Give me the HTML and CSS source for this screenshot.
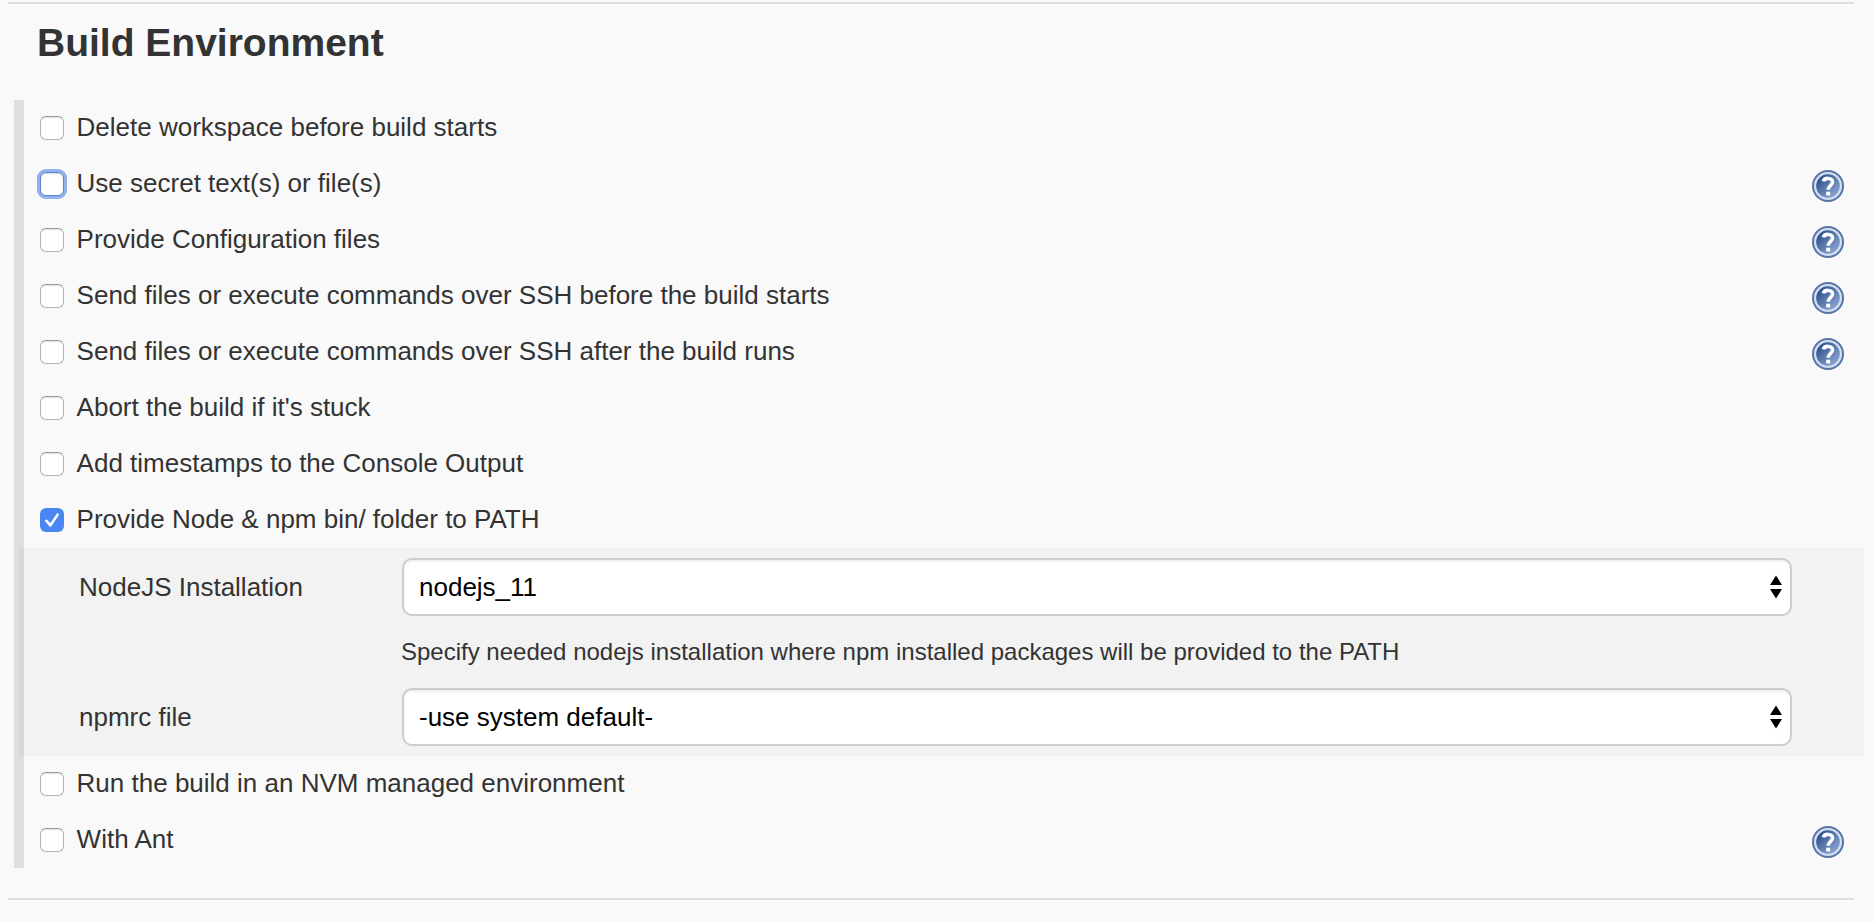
FILE: index.html
```
<!DOCTYPE html>
<html lang="en">
<head>
<meta charset="utf-8">
<title>Build Environment</title>
<link rel="stylesheet" href="styles.css">
</head>
<body>
<svg class="defs" width="0" height="0" aria-hidden="true">
  <defs>
    <linearGradient id="disc" x1="0" y1="0" x2="1" y2="1">
      <stop offset="0.2" stop-color="#34558f"/>
      <stop offset="0.85" stop-color="#8ba7d3"/>
    </linearGradient>
    <symbol id="help" viewBox="0 0 32 32">
      <circle cx="16" cy="16" r="16" fill="#5574a9"/>
      <circle cx="16" cy="16" r="12.9" fill="url(#disc)" stroke="#d3deef" stroke-width="2.2"/>
      <path d="M11.4 11.4C12.2 7.4 20.8 7.2 20.5 12.2C20.2 15.4 16.2 15.8 16.2 19.8" fill="none" stroke="#fff" stroke-width="3.6"/>
      <rect x="14.2" y="21.8" width="4" height="3.8" rx="0.6" fill="#fff"/>
    </symbol>
  </defs>
</svg>
<section class="section">
  <h1 class="title">Build Environment</h1>
  <div class="options">
    <label class="row"><input class="check" type="checkbox"><span>Delete workspace before build starts</span></label>
    <label class="row"><input class="check focused" type="checkbox"><span>Use secret text(s) or file(s)</span><svg class="help"><use href="#help"/></svg></label>
    <label class="row"><input class="check" type="checkbox"><span>Provide Configuration files</span><svg class="help"><use href="#help"/></svg></label>
    <label class="row"><input class="check" type="checkbox"><span>Send files or execute commands over SSH before the build starts</span><svg class="help"><use href="#help"/></svg></label>
    <label class="row"><input class="check" type="checkbox"><span>Send files or execute commands over SSH after the build runs</span><svg class="help"><use href="#help"/></svg></label>
    <label class="row"><input class="check" type="checkbox"><span>Abort the build if it's stuck</span></label>
    <label class="row"><input class="check" type="checkbox"><span>Add timestamps to the Console Output</span></label>
    <label class="row"><span class="check checked"><svg viewBox="0 0 24 24"><path d="M6.4 12.8L10.4 17.4L17.6 6.6"/></svg></span><span>Provide Node &amp; npm bin/ folder to PATH</span></label>
    <div class="panel">
      <span class="name">NodeJS Installation</span>
      <div class="select"><span>nodejs_11</span><svg class="arrows" viewBox="0 0 12 24"><path d="M0 10L6 0.5L12 10ZM0 14L6 23.5L12 14Z"/></svg></div>
      <p class="hint">Specify needed nodejs installation where npm installed packages will be provided to the PATH</p>
      <span class="name">npmrc file</span>
      <div class="select"><span>-use system default-</span><svg class="arrows" viewBox="0 0 12 24"><path d="M0 10L6 0.5L12 10ZM0 14L6 23.5L12 14Z"/></svg></div>
    </div>
    <label class="row"><input class="check" type="checkbox"><span>Run the build in an NVM managed environment</span></label>
    <label class="row"><input class="check" type="checkbox"><span>With Ant</span><svg class="help"><use href="#help"/></svg></label>
  </div>
</section>
</body>
</html>
```
FILE: styles.css
```
* { box-sizing: border-box; }
body {
  margin: 0;
  padding-top: 2px;
  background: #f9f9f9;
  color: #333;
  font: 26px/30px "Liberation Sans", Arial, sans-serif;
}
.defs { display: block; height: 0; }
.section {
  width: 1846px;
  height: 898px;
  margin-left: 8px;
  border-top: 2px solid #ddd;
  border-bottom: 2px solid #ddd;
}
.title {
  margin: 0;
  padding: 16px 0 0 29px;
  height: 96px;
  font-size: 39px;
  line-height: 46px;
  white-space: nowrap;
}
.options {
  width: 1840px;
  margin-left: 6px;
  border-left: 10px solid #dfdfdf;
}
.row {
  display: flex;
  align-items: center;
  height: 56px;
  padding: 0 10px 0 16px;
  white-space: nowrap;
}
.row > span:not(.check) { margin-top: -2px; }
.check {
  appearance: none;
  flex: none;
  width: 24px;
  height: 24px;
  margin: 0 12.6px 0 0;
  border: 1px solid #b4b4b4;
  border-top-color: #999;
  border-radius: 6px;
  background: #fff;
  box-shadow: inset 0 2px 2px -1px #ddd;
}
.focused {
  border-color: #5b82c4;
  box-shadow: 0 0 0 3px #92b0ea, inset 0 2px 2px -1px #ddd;
}
.checked {
  border: 0;
  background: #4a87f4;
  box-shadow: none;
}
.checked svg { display: block; }
.checked path {
  fill: none;
  stroke: #fff;
  stroke-width: 2.6;
  stroke-linecap: round;
  stroke-linejoin: round;
}
.help {
  width: 32px;
  height: 32px;
  margin: 4px 0 0 auto;
}
.panel {
  display: grid;
  grid-template-columns: 323px 1390px;
  grid-template-rows: 58px 72px 58px;
  align-items: center;
  width: 1846px;
  height: 208px;
  margin-left: -6px;
  padding: 10px 0 10px 61px;
  background: rgba(0, 0, 0, 0.028);
}
.select {
  display: flex;
  align-items: center;
  justify-content: space-between;
  height: 58px;
  padding: 0 8px 0 15px;
  border: 2px solid #ccc;
  border-radius: 10px;
  background: #fff;
  box-shadow: inset 0 2px 2px rgba(0, 0, 0, 0.06);
  color: #000;
}
.arrows { width: 12px; height: 24px; }
.hint {
  grid-column: 2;
  margin: 0 0 0 -1px;
  font-size: 24px;
  white-space: nowrap;
}
```
